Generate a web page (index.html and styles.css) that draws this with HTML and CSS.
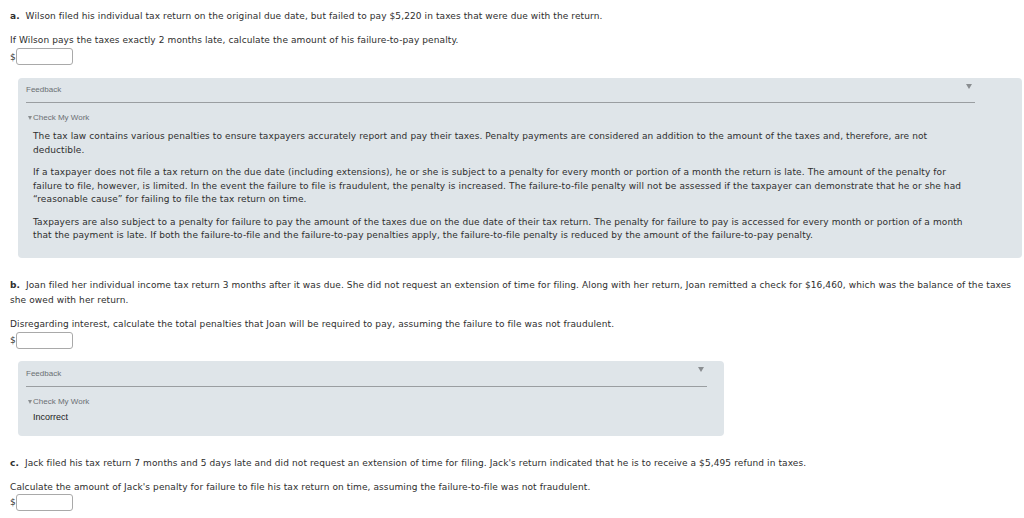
FILE: index.html
```html
<!DOCTYPE html>
<html>
<head>
<meta charset="utf-8">
<link rel="stylesheet" href="styles.css">
</head>
<body>
<div class="page">
  <section class="q">
    <p class="stem"><b>a.</b>&nbsp; Wilson filed his individual tax return on the original due date, but failed to pay $5,220 in taxes that were due with the return.</p>
    <p class="prompt">If Wilson pays the taxes exactly 2 months late, calculate the amount of his failure-to-pay penalty.</p>
    <div class="answer"><span class="dollar">$</span><span class="input"></span></div>
    <div class="feedback wide">
      <div class="fb-head"><span>Feedback</span><span class="caret"></span></div>
      <div class="cmw"><span class="tri"></span>Check My Work</div>
      <div class="fb-body">
        <p>The tax law contains various penalties to ensure taxpayers accurately report and pay their taxes. Penalty payments are considered an addition to the amount of the taxes and, therefore, are not<br>deductible.</p>
        <p>If a taxpayer does not file a tax return on the due date (including extensions), he or she is subject to a penalty for every month or portion of a month the return is late. The amount of the penalty for<br>failure to file, however, is limited. In the event the failure to file is fraudulent, the penalty is increased. The failure-to-file penalty will not be assessed if the taxpayer can demonstrate that he or she had<br>“reasonable cause” for failing to file the tax return on time.</p>
        <p>Taxpayers are also subject to a penalty for failure to pay the amount of the taxes due on the due date of their tax return. The penalty for failure to pay is accessed for every month or portion of a month<br>that the payment is late. If both the failure-to-file and the failure-to-pay penalties apply, the failure-to-file penalty is reduced by the amount of the failure-to-pay penalty.</p>
      </div>
    </div>
  </section>
  <section class="q">
    <p class="stem"><b>b.</b>&nbsp; Joan filed her individual income tax return 3 months after it was due. She did not request an extension of time for filing. Along with her return, Joan remitted a check for $16,460, which was the balance of the taxes<br>she owed with her return.</p>
    <p class="prompt">Disregarding interest, calculate the total penalties that Joan will be required to pay, assuming the failure to file was not fraudulent.</p>
    <div class="answer"><span class="dollar">$</span><span class="input"></span></div>
    <div class="feedback narrow">
      <div class="fb-head"><span>Feedback</span><span class="caret"></span></div>
      <div class="cmw"><span class="tri"></span>Check My Work</div>
      <div class="fb-result">Incorrect</div>
    </div>
  </section>
  <section class="q last">
    <p class="stem"><b>c.</b>&nbsp; Jack filed his tax return 7 months and 5 days late and did not request an extension of time for filing. Jack's return indicated that he is to receive a $5,495 refund in taxes.</p>
    <p class="prompt">Calculate the amount of Jack's penalty for failure to file his tax return on time, assuming the failure-to-file was not fraudulent.</p>
    <div class="answer"><span class="dollar">$</span><span class="input"></span></div>
  </section>
</div>
</body>
</html>
```
FILE: styles.css
```css
html, body {
  margin: 0;
  padding: 0;
  background: #fff;
}
.page {
  padding: 0 2px 0 10px;
  font-family: "DejaVu Sans", Verdana, sans-serif;
  font-size: 9px;
  letter-spacing: 0.1px;
  color: #2e2e2e;
}
.q p {
  margin: 0;
  line-height: 15px;
  white-space: nowrap;
}
.q .stem {
  margin-top: 20px;
}
.q:first-child .stem {
  margin-top: 9px;
}
.q .prompt {
  margin-top: 9px;
}
.answer {
  display: flex;
  align-items: center;
  margin-top: 0;
  height: 17px;
}
.q.last .answer {
  margin-top: -1px;
}
.dollar {
  font-size: 9px;
  color: #333;
  letter-spacing: 0;
}
.input {
  width: 55px;
  height: 15px;
  border: 1px solid #a9a9a9;
  border-radius: 3px;
  background: #fff;
}
.feedback {
  margin: 12px 0 0 8px;
  background: #dfe5e9;
  border-radius: 4px;
  padding: 0 0 0 8px;
  font-family: "Liberation Sans", Arial, sans-serif;
  letter-spacing: 0;
}
.feedback.wide {
  margin-top: 13px;
  padding-bottom: 15px;
}
.feedback.narrow {
  width: 698px;
  padding-bottom: 13px;
}
.fb-head {
  display: flex;
  justify-content: space-between;
  align-items: center;
  font-size: 8px;
  color: #6a6f73;
  height: 24px;
  border-bottom: 1px solid #9a9ea1;
}
.wide .fb-head {
  width: 949px;
  padding-bottom: 1px;
  height: 23px;
}
.narrow .fb-head {
  width: 681px;
  height: 25px;
}
.caret {
  width: 0;
  height: 0;
  border-left: 3px solid transparent;
  border-right: 3px solid transparent;
  border-top: 5px solid #8a8e91;
  margin-right: 3px;
  align-self: flex-start;
  margin-top: 6px;
}
.cmw {
  display: flex;
  align-items: center;
  font-size: 8px;
  color: #6a6f73;
  margin-top: 9px;
  line-height: 12px;
}
.tri {
  width: 0;
  height: 0;
  border-left: 2.5px solid transparent;
  border-right: 2.5px solid transparent;
  border-top: 4px solid #8a8e91;
  margin: 0 1px 0 2px;
}
.fb-body {
  padding-left: 7px;
  margin-top: 6px;
  font-family: "DejaVu Sans", Verdana, sans-serif;
  font-size: 9px;
  letter-spacing: 0.1px;
  color: #2e2e2e;
}
.fb-body p {
  margin: 0 0 9px 0;
  line-height: 13.5px;
  white-space: nowrap;
}
.fb-body p:last-child {
  margin-bottom: 0;
}
.fb-result {
  padding-left: 7px;
  margin-top: 3px;
  font-size: 9px;
  color: #222;
  line-height: 12px;
}
```
